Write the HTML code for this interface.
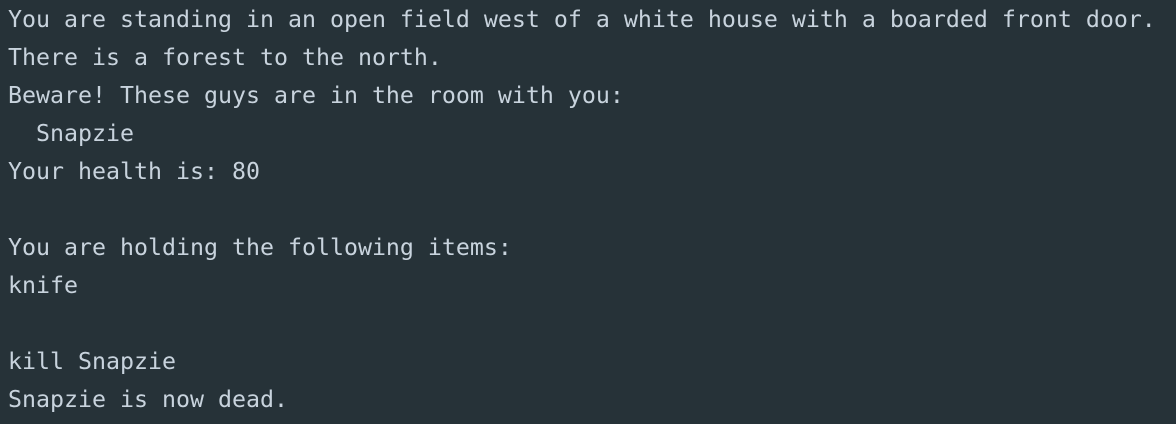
<!DOCTYPE html>
<html><head><meta charset="utf-8"><style>
html,body{margin:0;padding:0;background:#263238;width:1176px;height:424px;overflow:hidden}
pre{margin:0;padding:1px 0 0 8px;font-family:"DejaVu Sans Mono","Liberation Mono",monospace;font-size:23.25px;line-height:38px;color:#c8d3dd;white-space:pre}
</style></head><body><pre>You are standing in an open field west of a white house with a boarded front door.
There is a forest to the north.
Beware! These guys are in the room with you:
  Snapzie
Your health is: 80

You are holding the following items:
knife

kill Snapzie
Snapzie is now dead.</pre></body></html>
